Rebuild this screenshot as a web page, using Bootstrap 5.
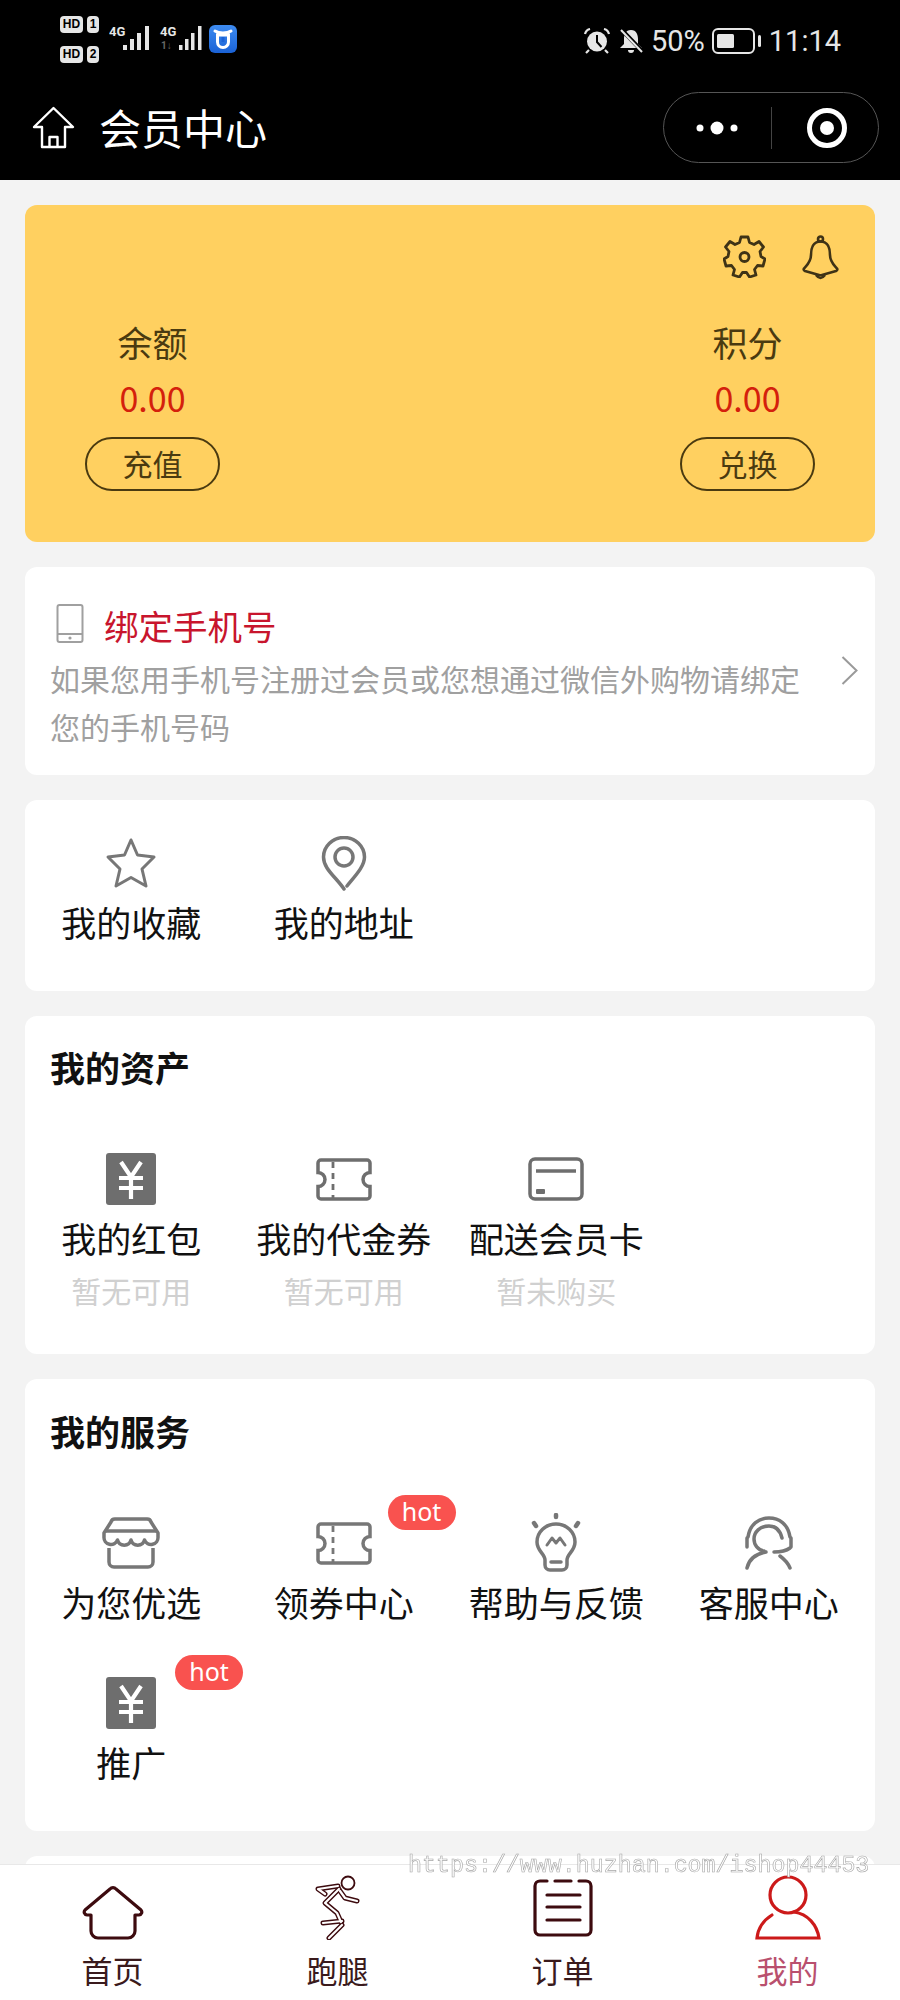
<!DOCTYPE html>
<html lang="zh">
<head>
<meta charset="utf-8">
<title>会员中心</title>
<link href="https://cdn.jsdelivr.net/npm/bootstrap@5.3.0/dist/css/bootstrap.min.css" rel="stylesheet">
<style>
html,body{height:2000px;overflow:hidden}
body{background:#f3f3f3;font-family:"Noto Sans CJK SC","Liberation Sans",sans-serif;color:#111;font-size:35px;line-height:48px;position:relative}
.topbar{background:#000;height:180px;color:#fff}
.statusrow{height:70px;padding:16px 59px 0 60px}
.simgrid{display:grid;grid-template-columns:23px 12px;grid-template-rows:17px 17px;column-gap:4px;row-gap:13px}
.simchip{background:#e6e6e6;color:#000;border-radius:4px;font:700 12px/17px "Liberation Sans",sans-serif;text-align:center}
.signals{margin:8px 0 0 10px}
.signals text{font:700 13px "Roboto",sans-serif;fill:#e6e6e6}
.appbadge{margin:9px 0 0 7px}
.sysright{margin-left:auto;margin-top:10px;gap:7px}
.systext{font:400 29px/30px "Roboto",sans-serif;color:#e6e6e6}
.navrow{height:110px;padding:4px 21px 0 32px}
.navtitle{font-size:42px;line-height:56px;margin-left:24px;color:#fff}
.capsule{width:216px;height:71px;border:1.5px solid #555;border-radius:36px}
.page{padding:25px 25px 0}
.tile{border:0;border-radius:12px;background:#fff;margin-bottom:25px;overflow:visible}
.wallet{background:#ffd060;height:337px;padding:30px 36px 0 60px}
.walletinner{padding-right:24px}
.walleticons{gap:36px;height:45px}
.walletcol{width:135px;color:#4a3a10;text-align:center}
.wlabel{line-height:50px;margin-top:37px}
.wvalue{color:#d4200c;font-size:34px;line-height:50px;margin-top:6px}
.wbtn{display:block;width:135px;height:54px;border:2.5px solid #4a3a10;border-radius:27px;font-size:30px;line-height:48px;margin-top:14px;color:#4a3a10}
.bindtile{height:208px;padding:37px 17px 0 25px}
.bindhead{color:#c8152d;font-size:34.500px;line-height:42px;gap:20px}
.bindphone{margin-left:6px}
.binddesc{width:766px;font-size:30px;line-height:48px;color:#a0a0a0;margin-top:8px}
.bindarrow{margin-left:auto;margin-top:52px}
.iconbox{height:58px;margin-bottom:6px}
.cell{text-align:center;position:relative}
.celllabel{line-height:48px;white-space:nowrap}
.cellsub{font-size:30px;line-height:44px;color:#d0d0d0;margin-top:6px}
.quicktile{height:191px;padding-top:34px}
.assettile{height:338px;padding-top:27px}
.servicetile{height:452px;padding-top:28px}
.tiletitle{font-weight:700;line-height:48px;padding-left:25px;margin-bottom:59px}
.rowgap{row-gap:48px}
.hotflag{position:absolute;left:150px;top:-19px;width:68px;height:35px;background:#f9524f;color:#fff;border-radius:18px;font-size:25px;line-height:33px;text-align:center;font-family:"Noto Sans","Liberation Sans",sans-serif}
.peektile{height:100px}
.tabbar{height:136px;background:#fff;border-top:1px solid #e8e8e8;padding-top:9px}
.tabcell{width:225px;text-align:center;color:#3a1a1c;font-size:31px}
.tabicon{height:66px;margin-bottom:10px}
.tablabel{line-height:40px}
.tabactive{color:#b9506e}
.orderfix{margin-bottom:3px}
.stamp{position:fixed;left:408px;top:1850px;z-index:1040;font:23.300px/32px "Liberation Mono",monospace;color:#fff;-webkit-text-stroke:.6px #a6a6a6;white-space:nowrap}
</style>
</head>
<body>
<header class="topbar">
  <div class="statusrow d-flex align-items-start">
    <div class="simgrid">
      <span class="simchip">HD</span><span class="simchip">1</span>
      <span class="simchip">HD</span><span class="simchip">2</span>
    </div>
    <svg class="signals" width="93" height="28" viewBox="0 0 93 28" fill="#e6e6e6">
      <text x="0" y="12">4G</text>
      <rect x="14" y="21" width="4" height="5"/><rect x="21" y="15" width="4" height="11"/><rect x="28" y="9" width="4" height="17"/><rect x="36" y="2" width="4" height="24"/>
      <text x="51" y="12">4G</text>
      <text x="52" y="25" style="fill:#666;font-size:10px">1↓</text>
      <rect x="70" y="21" width="3.500" height="5"/><rect x="76" y="15" width="3.500" height="11"/><rect x="82" y="9" width="3.500" height="17"/><rect x="89" y="2" width="3.500" height="24"/>
    </svg>
    <svg class="appbadge" width="28" height="28" viewBox="0 0 28 28">
      <defs><linearGradient id="bluegrad" x1="0" y1="0" x2="0" y2="1"><stop offset="0" stop-color="#3d8bf0"/><stop offset="1" stop-color="#1a62d6"/></linearGradient></defs>
      <rect width="28" height="28" rx="6" fill="url(#bluegrad)"/>
      <path d="M6 6 Q9 8 14 8 Q19 8 22 6 M8.500 9 V17 a5.500 5.500 0 0 0 11 0 V9 M8.500 10 H19.500" fill="none" stroke="#fff" stroke-width="3" stroke-linecap="round"/>
      <path d="M12.500 12 V17 h3 V12" fill="#1a62d6"/>
    </svg>
    <div class="sysright d-flex align-items-center">
      <svg width="28" height="26" viewBox="0 0 28 26">
        <circle cx="14" cy="13.500" r="10" fill="#e6e6e6"/>
        <path d="M14 7 V14 L18.500 19" fill="none" stroke="#000" stroke-width="2"/>
        <path d="M2 6 Q3 2 7 1 M26 6 Q25 2 21 1 M6 22 L3 25 M22 22 L25 25" fill="none" stroke="#e6e6e6" stroke-width="2.200"/>
      </svg>
      <svg width="26" height="26" viewBox="0 0 26 26">
        <path d="M13 2 C7.500 2 6 7 6 11 V16 L2 20 H24 L20 16 V11 C20 7 18.500 2 13 2Z" fill="#e6e6e6"/>
        <path d="M10 22 a3 3 0 0 0 6 0Z" fill="#e6e6e6"/>
        <path d="M3 1 L24 23" stroke="#000" stroke-width="4"/>
        <path d="M3 2 L24 24" stroke="#e6e6e6" stroke-width="2"/>
      </svg>
      <span class="systext">50%</span>
      <svg width="50" height="26" viewBox="0 0 50 26">
        <rect x="1" y="1" width="41" height="24" rx="5" fill="none" stroke="#e6e6e6" stroke-width="2"/>
        <rect x="5" y="6" width="17" height="14" rx="1.500" fill="#e6e6e6"/>
        <rect x="46" y="7" width="3" height="12" rx="1.500" fill="#e6e6e6"/>
      </svg>
      <span class="systext">11:14</span>
    </div>
  </div>
  <div class="navrow d-flex align-items-center">
    <svg width="43" height="43" viewBox="0 0 43 43" fill="none" stroke="#fff" stroke-width="2.400" stroke-linejoin="round">
      <path d="M21.500 2 L41 21 H33 V41 H10 V21 H2Z"/>
      <path d="M17.500 41 V31 H25.500 V41"/>
    </svg>
    <span class="navtitle">会员中心</span>
    <div class="capsule ms-auto d-flex align-items-center">
      <svg width="213" height="68" viewBox="0 0 213 68">
        <circle cx="36" cy="35" r="3.500" fill="#fff"/><circle cx="53" cy="35" r="6.500" fill="#fff"/><circle cx="70" cy="35" r="3.500" fill="#fff"/>
        <path d="M107.500 14 V56" stroke="#444" stroke-width="1"/>
        <circle cx="163" cy="35" r="17.500" fill="none" stroke="#fff" stroke-width="5"/>
        <circle cx="163" cy="35" r="7" fill="#fff"/>
      </svg>
    </div>
  </div>
</header>

<main class="page">
  <section class="card tile wallet">
    <div class="d-flex justify-content-end walleticons">
      <svg width="43" height="43" viewBox="0 0 43 43" fill="none" stroke="#3f3316" stroke-width="2.800" stroke-linejoin="round">
        <path d="M18 2 H25 L26.500 7.500 L31 9.500 L36 6.500 L40.500 12 L37 16.500 L38 21.500 L42 24 L40 31 L34.500 30.500 L31.500 34.500 L33 40 L26.500 42 L23.500 37.500 H19.500 L16.500 42 L10 40 L11.500 34.500 L8.500 30.500 L3 31 L1 24 L5 21.500 L6 16.500 L2.500 12 L7 6.500 L12 9.500 L16.500 7.500Z"/>
        <circle cx="21.500" cy="22" r="4.500"/>
      </svg>
      <svg width="37" height="45" viewBox="0 0 37 45" fill="none" stroke="#3f3316" stroke-width="2.600" stroke-linejoin="round">
        <circle cx="18.500" cy="4" r="2.500"/>
        <path d="M18.500 6.500 C11 6.500 9 13 9 20 C9 27 5 30 2 33.500 Q1 35 3 36 L17 40 Q18.500 40.500 20 40 L34 36 Q36 35 35 33.500 C32 30 28 27 28 20 C28 13 26 6.500 18.500 6.500Z"/>
        <path d="M14 40 Q18.500 46 23 40"/>
      </svg>
    </div>
    <div class="d-flex justify-content-between walletinner">
      <div class="walletcol">
        <div class="wlabel">余额</div>
        <div class="wvalue">0.00</div>
        <a class="wbtn text-decoration-none">充值</a>
      </div>
      <div class="walletcol">
        <div class="wlabel">积分</div>
        <div class="wvalue">0.00</div>
        <a class="wbtn text-decoration-none">兑换</a>
      </div>
    </div>
  </section>

  <section class="card tile bindtile flex-row align-items-start">
    <div>
      <div class="bindhead d-flex align-items-start">
        <svg class="bindphone" width="28" height="39" viewBox="0 0 28 39" fill="none" stroke="#a0a0a0" stroke-width="2">
          <rect x="1.500" y="1" width="25" height="37" rx="2"/>
          <path d="M1.500 30 H26.500"/>
          <circle cx="14" cy="34" r="1.600" fill="#a0a0a0" stroke="none"/>
        </svg>
        <span>绑定手机号</span>
      </div>
      <div class="binddesc">如果您用手机号注册过会员或您想通过微信外购物请绑定您的手机号码</div>
    </div>
    <svg class="bindarrow" width="17" height="29" viewBox="0 0 17 29" fill="none" stroke="#9a9a9a" stroke-width="2">
      <path d="M1.500 1 L15.500 14.500 L1.500 28"/>
    </svg>
  </section>

  <section class="card tile quicktile">
    <div class="row g-0">
      <div class="col-3 cell">
        <div class="iconbox d-flex justify-content-center align-items-center">
          <svg width="52" height="52" viewBox="0 0 52 52" fill="none" stroke="#777" stroke-width="3" stroke-linejoin="round">
            <path d="M26 3 L32.500 18 L49 20 L37 32 L41 49 L26 40.500 L11 49 L15 32 L3 20 L19.500 18Z"/>
          </svg>
        </div>
        <div class="celllabel">我的收藏</div>
      </div>
      <div class="col-3 cell">
        <div class="iconbox d-flex justify-content-center align-items-center">
          <svg width="46" height="55" viewBox="0 0 46 55" fill="none" stroke="#777" stroke-width="3.500" stroke-linecap="round">
            <path d="M23 53 C15 41 2.500 33 2.500 21 A20.500 19.500 0 0 1 43.500 21 C43.500 31 33 41 26 50"/>
            <circle cx="23" cy="21" r="9"/>
          </svg>
        </div>
        <div class="celllabel">我的地址</div>
      </div>
    </div>
  </section>

  <section class="card tile assettile">
    <div class="tiletitle">我的资产</div>
    <div class="row g-0">
      <div class="col-3 cell">
        <div class="iconbox d-flex justify-content-center align-items-center">
          <svg width="50" height="52" viewBox="0 0 50 52">
            <rect width="50" height="52" rx="3" fill="#6e6e6e"/>
            <path d="M15 9 L25 24 L35 9 M13 25 H37 M13 35 H37 M25 24 V46" fill="none" stroke="#fff" stroke-width="4.200"/>
          </svg>
        </div>
        <div class="celllabel">我的红包</div>
        <div class="cellsub">暂无可用</div>
      </div>
      <div class="col-3 cell">
        <div class="iconbox d-flex justify-content-center align-items-center">
          <svg width="56" height="43" viewBox="0 0 56 43" fill="none" stroke="#6e6e6e" stroke-width="3.500">
            <path d="M5 2 H51 a3 3 0 0 1 3 3 V14.500 a7 7 0 0 0 0 14 V38 a3 3 0 0 1 -3 3 H5 a3 3 0 0 1 -3 -3 V28.500 a7 7 0 0 0 0 -14 V5 a3 3 0 0 1 3 -3Z"/>
            <path d="M17 4 V40" stroke-width="2.800" stroke-dasharray="6 5"/>
          </svg>
        </div>
        <div class="celllabel">我的代金券</div>
        <div class="cellsub">暂无可用</div>
      </div>
      <div class="col-3 cell">
        <div class="iconbox d-flex justify-content-center align-items-center">
          <svg width="56" height="44" viewBox="0 0 56 44" fill="none" stroke="#6e6e6e" stroke-width="3.500">
            <rect x="2" y="2" width="52" height="40" rx="5"/>
            <path d="M8 14 H48"/>
            <rect x="8" y="32" width="9" height="5" rx="1" fill="#6e6e6e" stroke="none"/>
          </svg>
        </div>
        <div class="celllabel">配送会员卡</div>
        <div class="cellsub">暂未购买</div>
      </div>
    </div>
  </section>

  <section class="card tile servicetile">
    <div class="tiletitle">我的服务</div>
    <div class="row g-0 rowgap">
      <div class="col-3 cell">
        <div class="iconbox d-flex justify-content-center align-items-center">
          <svg width="58" height="52" viewBox="0 0 58 52" fill="none" stroke="#777" stroke-width="3.500" stroke-linejoin="round">
            <path d="M13 2 H45 a4 4 0 0 1 4 3 L56 16 V20 a7 7 0 0 1 -13.500 3 a7 7 0 0 1 -13.500 0 a7 7 0 0 1 -13.500 0 a7 7 0 0 1 -13.500 -3 V16 L9 5 a4 4 0 0 1 4 -3Z"/>
            <path d="M3 14 H55"/>
            <path d="M7 31 V45 a5 5 0 0 0 5 5 H46 a5 5 0 0 0 5 -5 V31"/>
          </svg>
        </div>
        <div class="celllabel">为您优选</div>
      </div>
      <div class="col-3 cell">
        <div class="iconbox d-flex justify-content-center align-items-center">
          <svg width="56" height="43" viewBox="0 0 56 43" fill="none" stroke="#777" stroke-width="3.500">
            <path d="M5 2 H51 a3 3 0 0 1 3 3 V14.500 a7 7 0 0 0 0 14 V38 a3 3 0 0 1 -3 3 H5 a3 3 0 0 1 -3 -3 V28.500 a7 7 0 0 0 0 -14 V5 a3 3 0 0 1 3 -3Z"/>
            <path d="M17 4 V40" stroke-width="2.800" stroke-dasharray="6 5"/>
          </svg>
        </div>
        <div class="celllabel">领券中心</div>
        <span class="hotflag">hot</span>
      </div>
      <div class="col-3 cell">
        <div class="iconbox d-flex justify-content-center align-items-center">
          <svg width="58" height="60" viewBox="0 0 58 60" fill="none" stroke="#777" stroke-width="3.500" stroke-linecap="round" stroke-linejoin="round">
            <path d="M29 2 V4 M7 10 L9 13 M51 10 L49 13" stroke-width="4.500"/>
            <path d="M18 47 C18 41 10 38 10 29 A19 18 0 0 1 48 29 C48 38 40 41 40 47 V52 a5 5 0 0 1 -5 5 H23 a5 5 0 0 1 -5 -5Z"/>
            <path d="M24 49 H34"/>
            <path d="M20 32 L25 25 L29 30 L33 25 L38 32" stroke-width="3"/>
          </svg>
        </div>
        <div class="celllabel">帮助与反馈</div>
      </div>
      <div class="col-3 cell">
        <div class="iconbox d-flex justify-content-center align-items-center">
          <svg width="50" height="54" viewBox="0 0 50 54" fill="none" stroke="#777" stroke-width="3.500" stroke-linecap="round">
            <path d="M3 22 V31 M47 22 V31"/>
            <path d="M4 21 C6 8 15 2 25 2 C35 2 44 8 46 21"/>
            <path d="M38 22 C36 14 31 10 25 10 C16 10 10 16 10 23 C10 29 14 34 20 35"/>
            <path d="M46 32 C42 35 36 36 30 36"/>
            <path d="M3 52 C5 43 11 38 22 36"/>
            <path d="M36 40 C40 43 44 47 46 52"/>
          </svg>
        </div>
        <div class="celllabel">客服中心</div>
      </div>
      <div class="col-3 cell">
        <div class="iconbox d-flex justify-content-center align-items-center">
          <svg width="50" height="52" viewBox="0 0 50 52">
            <rect width="50" height="52" rx="3" fill="#6e6e6e"/>
            <path d="M15 9 L25 24 L35 9 M13 25 H37 M13 35 H37 M25 24 V46" fill="none" stroke="#fff" stroke-width="4.200"/>
          </svg>
        </div>
        <div class="celllabel">推广</div>
        <span class="hotflag">hot</span>
      </div>
    </div>
  </section>

  <section class="card tile peektile"></section>
</main>

<nav class="fixed-bottom tabbar d-flex">
  <div class="tabcell">
    <div class="tabicon d-flex justify-content-center align-items-end">
      <svg width="62" height="54" viewBox="0 0 62 54" fill="none" stroke="#3d0b0f" stroke-width="3.200" stroke-linejoin="round">
        <path d="M28 3 a4 4 0 0 1 6 0 L59 24 a3 3 0 0 1 -2 5 H53 V45 a7 7 0 0 1 -7 7 H16 a7 7 0 0 1 -7 -7 V29 H5 a3 3 0 0 1 -2 -5Z"/>
      </svg>
    </div>
    <div class="tablabel">首页</div>
  </div>
  <div class="tabcell">
    <div class="tabicon d-flex justify-content-center align-items-end">
      <svg width="48" height="65" viewBox="0 0 48 65" fill="none" stroke-linecap="round" stroke-linejoin="round">
        <g stroke="#3d0b0f" stroke-width="5">
          <path d="M24 11 L4 14 L11 19"/><path d="M26 16 L31 23 L43 26"/><path d="M25 14 L11 28 L23 38 L27 47"/><path d="M9 48 L28 46"/><path d="M28 50 L15 63"/>
        </g>
        <g stroke="#fff" stroke-width="2.200">
          <path d="M24 11 L4 14 L11 19"/><path d="M26 16 L31 23 L43 26"/><path d="M25 14 L11 28 L23 38 L27 47"/><path d="M9 48 L28 46"/><path d="M28 50 L15 63"/>
        </g>
        <circle cx="34" cy="8" r="6.500" stroke="#3d0b0f" stroke-width="1.800" fill="#fff"/>
      </svg>
    </div>
    <div class="tablabel">跑腿</div>
  </div>
  <div class="tabcell">
    <div class="tabicon d-flex justify-content-center align-items-end">
      <svg class="orderfix" width="60" height="58" viewBox="0 0 60 58" fill="none" stroke="#3d0b0f" stroke-width="3.200" stroke-linecap="round">
        <path d="M14 2 H7 a5 5 0 0 0 -5 5 V51 a5 5 0 0 0 5 5 H53 a5 5 0 0 0 5 -5 V7 a5 5 0 0 0 -5 -5 H46"/>
        <path d="M22 2 H38 M14 16 H47 M14 28 H47 M14 41 H47"/>
      </svg>
    </div>
    <div class="tablabel">订单</div>
  </div>
  <div class="tabcell tabactive">
    <div class="tabicon d-flex justify-content-center align-items-end">
      <svg width="66" height="65" viewBox="0 0 66 65" fill="none" stroke="#cc1a1a" stroke-width="3.200" stroke-linecap="round">
        <circle cx="33" cy="20" r="18"/>
        <path d="M17 40 C9 45 3 53 2 63 H64 C62 50 53 39 39 37"/>
      </svg>
    </div>
    <div class="tablabel">我的</div>
  </div>
</nav>

<div class="stamp">https://www.huzhan.com/ishop44453</div>

<script src="https://cdn.jsdelivr.net/npm/bootstrap@5.3.0/dist/js/bootstrap.bundle.min.js"></script>
</body>
</html>
